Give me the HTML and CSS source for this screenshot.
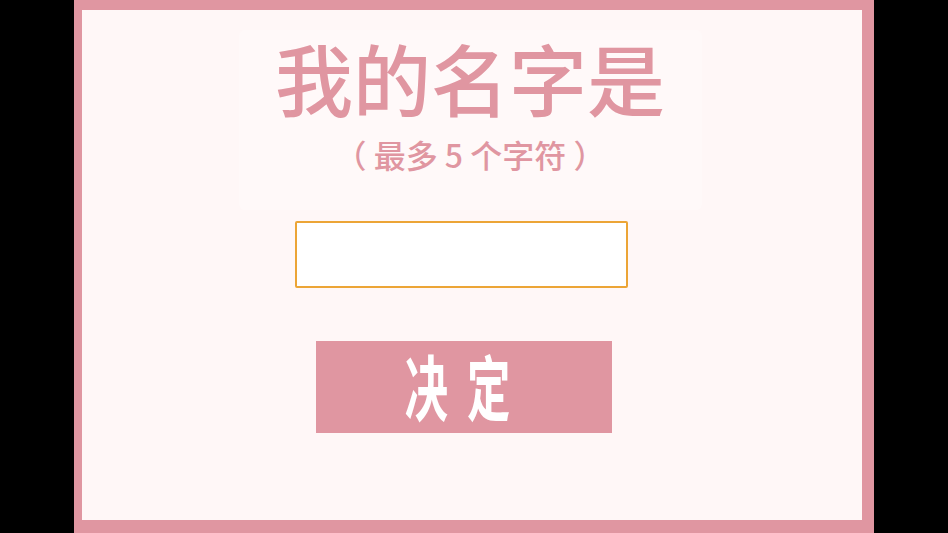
FILE: index.html
```html
<!DOCTYPE html>
<html lang="zh-CN">
<head>
<meta charset="utf-8">
<title>我的名字是</title>
<link rel="stylesheet" href="styles.css">
</head>
<body>
<div class="frame">
  <div class="inner">
    <div class="heading">
      <h1 class="title">我的名字是</h1>
      <p class="subtitle">（ 最多 5 个字符 ）</p>
    </div>
    <input class="name-input" type="text" maxlength="5">
    <button class="confirm" type="button"><span class="confirm-label">决定</span></button>
  </div>
</div>
</body>
</html>
```

FILE: styles.css
```css
html, body {
  margin: 0;
  padding: 0;
}
body {
  width: 948px;
  height: 533px;
  background: #000;
  display: flex;
  justify-content: center;
  overflow: hidden;
  font-family: "Noto Sans CJK SC", "Noto Sans", sans-serif;
}
.frame {
  width: 800px;
  height: 533px;
  box-sizing: border-box;
  background: #e096a1;
  padding: 10px 12px 13px 8px;
}
.inner {
  height: 100%;
  background: #fff7f7;
  display: flex;
  flex-direction: column;
  align-items: center;
}
.heading {
  margin-top: 20px;
  margin-right: 4px;
  width: 463px;
  height: 180px;
  flex: none;
  box-sizing: border-box;
  background: #fff9f9;
  border-radius: 6px;
  display: flex;
  flex-direction: column;
  align-items: center;
  color: #e096a1;
}
.title {
  margin: 8px 0 0;
  font-size: 78px;
  font-weight: 500;
  line-height: 1;
}
.subtitle {
  margin: 22px 0 0;
  font-size: 32px;
  font-weight: 500;
  line-height: 1;
}
.name-input {
  margin-top: 11px;
  margin-right: 22px;
  width: 333px;
  height: 67px;
  flex: none;
  box-sizing: border-box;
  border: 2px solid #eca536;
  border-radius: 2px;
  background: #fff;
  outline: none;
  padding: 0 10px;
  font-size: 28px;
  font-family: inherit;
}
.confirm {
  margin-top: 53px;
  margin-right: 17px;
  width: 296px;
  height: 92px;
  flex: none;
  border: none;
  border-radius: 0;
  background: #e096a1;
  color: #fff;
  padding: 0 0 6px 8px;
  display: flex;
  align-items: center;
  justify-content: center;
}
.confirm-label {
  display: inline-block;
  font-family: "Noto Sans CJK SC", sans-serif;
  font-weight: 700;
  font-size: 71px;
  line-height: 1;
  letter-spacing: 31px;
  transform: scaleX(0.61);
}
```
